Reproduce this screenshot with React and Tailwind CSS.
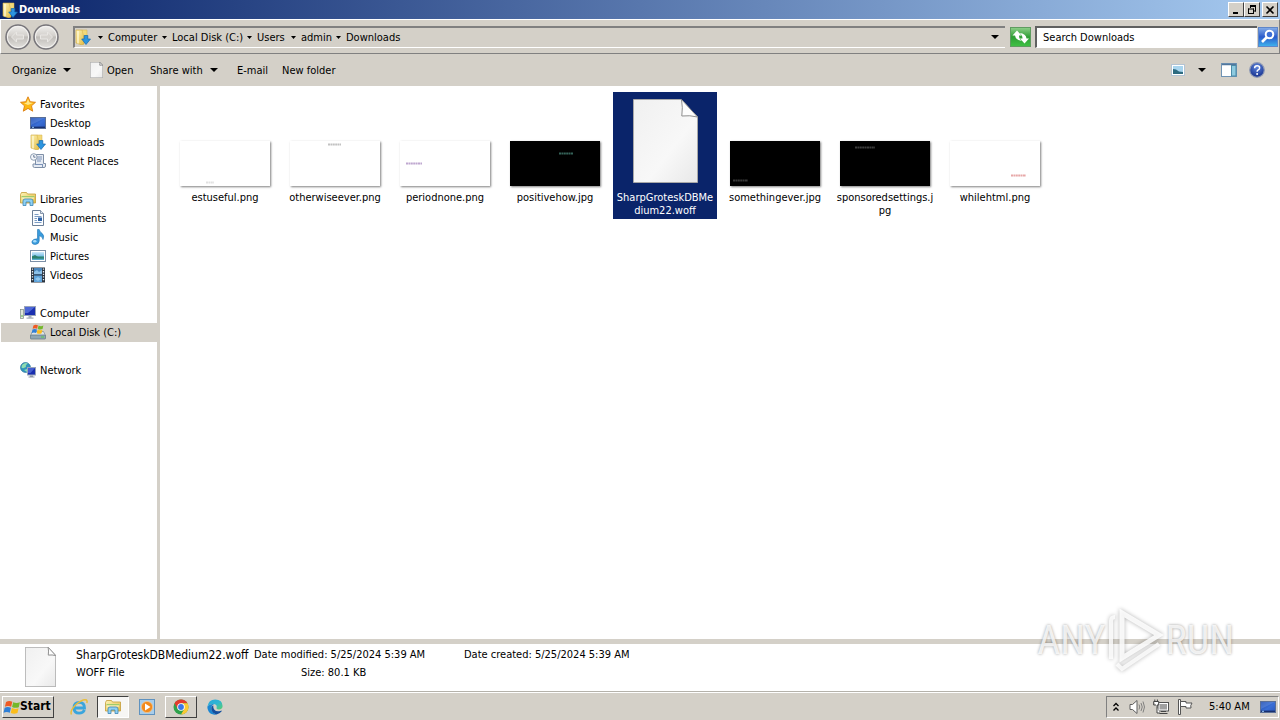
import React from "react";

function Svg({ w = 16, h = 16, children, className = "" }) {
  return (
    <svg width={w} height={h} viewBox={`0 0 ${w} ${h}`} className={`shrink-0 ${className}`} aria-hidden="true">
      {children}
    </svg>
  );
}

function Gradients() {
  return (
    <svg width="0" height="0" className="absolute" aria-hidden="true">
      <defs>
        <linearGradient id="folder" x1="0" y1="0" x2="1" y2="1">
          <stop offset="0" stopColor="#fdf3b4" />
          <stop offset="1" stopColor="#e3bb45" />
        </linearGradient>
        <linearGradient id="screen" x1="0" y1="0" x2="1" y2="1">
          <stop offset="0" stopColor="#1b3f9e" />
          <stop offset="0.55" stopColor="#3a6fd6" />
          <stop offset="1" stopColor="#2a55b8" />
        </linearGradient>
        <linearGradient id="sky" x1="0" y1="0" x2="0" y2="1">
          <stop offset="0" stopColor="#cfeafa" />
          <stop offset="0.5" stopColor="#7cc0e6" />
          <stop offset="0.6" stopColor="#2f8a7a" />
          <stop offset="1" stopColor="#5cb3de" />
        </linearGradient>
        <linearGradient id="orb" x1="0" y1="0" x2="0" y2="1">
          <stop offset="0" stopColor="#f2f1ef" />
          <stop offset="0.45" stopColor="#d3d0cc" />
          <stop offset="0.5" stopColor="#bfbcb8" />
          <stop offset="1" stopColor="#e6e4e1" />
        </linearGradient>
        <linearGradient id="paper" x1="0" y1="0" x2="1" y2="1">
          <stop offset="0" stopColor="#f0f0f0" />
          <stop offset="0.6" stopColor="#f8f8f8" />
          <stop offset="1" stopColor="#e8e8e8" />
        </linearGradient>
        <linearGradient id="green" x1="0" y1="0" x2="0" y2="1">
          <stop offset="0" stopColor="#8fd08a" />
          <stop offset="0.5" stopColor="#2f9e35" />
          <stop offset="1" stopColor="#3fc244" />
        </linearGradient>
        <linearGradient id="blue" x1="0" y1="0" x2="0" y2="1">
          <stop offset="0" stopColor="#86aee8" />
          <stop offset="0.5" stopColor="#2a5bcb" />
          <stop offset="1" stopColor="#3fb4ee" />
        </linearGradient>
        <radialGradient id="help" cx="0.5" cy="0.3" r="0.7">
          <stop offset="0" stopColor="#5f86dd" />
          <stop offset="1" stopColor="#152f8c" />
        </radialGradient>
        <linearGradient id="edge" x1="0" y1="0" x2="1" y2="1">
          <stop offset="0" stopColor="#2aa7d8" />
          <stop offset="0.5" stopColor="#2fb5d4" />
          <stop offset="1" stopColor="#5ad06a" />
        </linearGradient>
      </defs>
    </svg>
  );
}

const DownloadsIcon = () => (
  <Svg>
    <path d="M1 1h6l2 1.5V15L7 16 1 14z" fill="url(#folder)" stroke="#cda63a" strokeWidth=".6" />
    <path d="M7 1h5v8H9z" fill="#f3d979" stroke="#d4b04a" strokeWidth=".5" />
    <path d="M3 2v12.5" stroke="#fffbe0" strokeWidth="1.2" />
    <path d="M9.2 6.5h3.6V10h2.7L11 15.5 6.7 10h2.5z" fill="#2c95e0" stroke="#1467ad" strokeWidth=".7" />
  </Svg>
);

const StarIcon = () => (
  <Svg>
    <path d="M8 .8l2.2 4.9 5.3.6-4 3.5 1.2 5.4L8 12.4l-4.7 2.8 1.2-5.4-4-3.5 5.3-.6z" fill="#fdb813" stroke="#dd7f12" strokeWidth=".9" />
    <path d="M8 3l1.5 3.6 3.6.5L8 9 4 7.2l2.6-.5z" fill="#ffe78a" />
  </Svg>
);

const DesktopIcon = () => (
  <Svg>
    <rect x=".5" y="2.5" width="15" height="11" fill="url(#screen)" stroke="#5a6f96" />
    <path d="M1 3h14L1 10z" fill="#7ba7ef" opacity=".35" />
    <path d="M1 12.3h14" stroke="#18306e" strokeWidth="1.4" />
    <path d="M2 12.3h2" stroke="#9fd0ff" />
  </Svg>
);

const RecentIcon = () => (
  <Svg>
    <path d="M5.5 1.5h8v9h2v2.5q0 1.5-1.5 1.5H4.5q-1.5 0-1.5-1.5v-2h2.5z" fill="#e6ebf3" stroke="#7f8fa6" />
    <path d="M7 4h5M7 6h5M7 8h4M5 11.5h7M12.5 11v3" stroke="#7c93b8" />
    <circle cx="3.8" cy="4" r="3.3" fill="#f4f7fb" stroke="#8f9eb2" />
    <path d="M3.8 2v2.2h1.7" stroke="#44587a" fill="none" strokeWidth=".8" />
  </Svg>
);

const LibraryIcon = () => (
  <Svg>
    <path d="M.5 3.5l1-2h5l1 1.5h8v9H.5z" fill="url(#folder)" stroke="#c49c36" strokeWidth=".8" />
    <path d="M1.5 5h13v1.5h-13z" fill="#9fcb6a" />
    <path d="M2 7h12" stroke="#fff8cf" />
    <path d="M3 14.5V10q0-2 2-2h6q2 0 2 2v4.5h-3V11H6v3.5z" fill="#8fd0f2" stroke="#3c86b6" strokeWidth=".8" />
  </Svg>
);

const DocumentIcon = () => (
  <Svg>
    <path d="M2.500.5h8l3 3v12h-11z" fill="#fbfdff" stroke="#6c7f98" />
    <path d="M10.500.5v3h3" fill="#dfe7f1" stroke="#6c7f98" strokeWidth=".8" />
    <path d="M4.5 4.5h4M4.5 6.5h7M4.5 8.5h2.5M4.5 10.5h2.5M4.5 12.5h7" stroke="#7c9cc4" />
    <rect x="8" y="7.5" width="4" height="3.5" fill="#2d62a8" />
  </Svg>
);

const MusicIcon = () => (
  <Svg>
    <path
      d="M7.500.5h1.700q.5 2.300 2.800 3.800 2.800 2.200 1 6.200-.2-3-3.800-3.800V12q-.2 3-3.700 3.500Q1.500 15.500 2 12.500q.8-2.800 5.500-2.700z"
      fill="#3a9bdc"
      stroke="#1f74b4"
      strokeWidth=".6"
    />
    <ellipse cx="4.800" cy="12.300" rx="1.700" ry="1.300" fill="#a6dcfb" />
  </Svg>
);

const PictureIcon = () => (
  <Svg>
    <rect x=".5" y="2.5" width="15" height="11" fill="#fff" stroke="#7c8fa6" />
    <rect x="2" y="4" width="12" height="8" fill="url(#sky)" />
    <path d="M2 8.5l3-1.5 3 2 6 .5v1H2z" fill="#2b7f6c" />
  </Svg>
);

const VideoIcon = () => (
  <Svg>
    <rect x="1" y=".5" width="14" height="15" fill="#2b3440" />
    <rect x="4" y="1" width="8" height="6.5" fill="#4a86bd" />
    <rect x="4" y="8.5" width="8" height="6.5" fill="#5fa4dc" />
    <path d="M4 5l3-2 2 2 3-2v4H4zM5 12l3-2 3 2-3 2z" fill="#9cd0f2" opacity=".8" />
    <path d="M2.5 1.5v13M13.5 1.5v13" stroke="#e8eef4" strokeWidth="1.3" strokeDasharray="1.3 1.3" />
  </Svg>
);

const ComputerIcon = () => (
  <Svg>
    <rect x=".5" y="4.500" width="3" height="9" fill="#dfe6d8" stroke="#7d8b86" strokeWidth=".7" />
    <path d="M2 10v2" stroke="#5bb544" />
    <rect x="4.500" y="1.500" width="11" height="9" fill="#1a2fb0" stroke="#9aa4b8" />
    <path d="M5 2h10L8 8H5z" fill="#6f8df0" opacity=".6" />
    <path d="M8.500 11h3v1.500h2v1.300h-7v-1.300h2z" fill="#a8b0bb" />
  </Svg>
);

function Flag() {
  return (
    <g>
      <path d="M1.800 1.800Q4.600 0 7.400 1.600L6.400 6Q3.700 4.600.8 6z" fill="#ee5a24" />
      <path d="M8.200 2q3 1.400 6 0l-1 4.400q-3 1.200-6-.2z" fill="#74b82b" />
      <path d="M.6 6.900q2.900-1.300 5.600.1L5.200 11.400Q2.500 10-.4 11.300z" fill="#2f7fd6" />
      <path d="M7 7.200q3 1.400 6 .1l-1 4.300q-3 1.300-6 0z" fill="#fbbd1b" />
    </g>
  );
}

const DiskIcon = () => (
  <Svg>
    <path d="M2.500 7.500h11l2 4H.5z" fill="#dce3e8" stroke="#7f8c96" strokeWidth=".7" />
    <rect x=".5" y="11" width="15" height="4" rx=".6" fill="#8fa6b2" stroke="#5e7581" strokeWidth=".7" />
    <path d="M11 13h3" stroke="#55d04a" />
    <g transform="translate(2 0) scale(.8)">
      <Flag />
    </g>
  </Svg>
);

const NetworkIcon = () => (
  <Svg>
    <circle cx="5.500" cy="5.500" r="5" fill="#3193bd" stroke="#1d6b94" strokeWidth=".6" />
    <path d="M2 3q3-3 6-1.500Q5 3 6 5 3 7 1.500 5.500zM4 8l3-1v3z" fill="#8fdcb0" />
    <rect x="7.500" y="5.500" width="8" height="7.500" fill="#1a2fb0" stroke="#98a3b8" />
    <path d="M8 6h7l-4.500 5H8z" fill="#6f8df0" opacity=".5" />
    <path d="M10 13.500h3v1h1.500v1h-6v-1H10z" fill="#8f98a6" />
  </Svg>
);

function PageIcon({ w, h }) {
  return (
    <svg width={w} height={h} viewBox="0 0 65 84" preserveAspectRatio="none" className="shrink-0" aria-hidden="true">
      <path
        d="M.500.500H48L64.500 18V83.500H.500z"
        fill="url(#paper)"
        stroke="#a8a8a8"
        strokeWidth="1"
        vectorEffect="non-scaling-stroke"
      />
      <path
        d="M48.500.500q1.500 8 .300 16.500 8-1 15.700 1z"
        fill="#fdfdfd"
        stroke="#8f8f8f"
        strokeWidth="1"
        vectorEffect="non-scaling-stroke"
      />
    </svg>
  );
}

function Caret({ small = false }) {
  return small ? (
    <Svg w={5} h={3}>
      <path d="M0 0h5L2.500 3z" />
    </Svg>
  ) : (
    <Svg w={8} h={4}>
      <path d="M0 0h8L4 4z" />
    </Svg>
  );
}

const RAISED = "border border-t-white border-l-white border-r-[#404040] border-b-[#404040] bg-[#d4d0c8]";

function TitleBar() {
  return (
    <header className="flex h-[19px] shrink-0 items-center bg-linear-to-r/srgb from-[#0a246a] to-[#a6caf0] pr-[2px] pl-[2px]">
      <DownloadsIcon />
      <h1 className="ml-px flex-1 text-[11px] leading-[13px] font-bold text-white">Downloads</h1>
      <div className="flex">
        <button aria-label="Minimize" className={`flex h-[15px] w-4 items-center justify-center ${RAISED}`}>
          <Svg w={10} h={10}>
            <path d="M2 7h5v2H2z" />
          </Svg>
        </button>
        <button aria-label="Restore" className={`flex h-[15px] w-4 items-center justify-center ${RAISED}`}>
          <Svg w={10} h={10}>
            <path d="M3 .5h6M3.500 0v3M8.500 0v6.500M7 6h2M1 4h6M1.500 3.500V9M6.500 3.500V9M1 8.500h6M3 1.500h6" stroke="#000" fill="none" />
          </Svg>
        </button>
        <button aria-label="Close" className={`ml-[2px] flex h-[15px] w-4 items-center justify-center ${RAISED}`}>
          <Svg w={10} h={10}>
            <path d="M1.500 1.500l7 7M8.500 1.500l-7 7" stroke="#000" strokeWidth="1.600" />
          </Svg>
        </button>
      </div>
    </header>
  );
}

function NavButton({ label, flip }) {
  return (
    <button aria-label={label}>
      <Svg w={26} h={26}>
        <circle cx="13" cy="13" r="12" fill="url(#orb)" stroke="#77757a" strokeWidth="1.500" />
        <circle cx="13" cy="13" r="10.600" fill="none" stroke="#f4f3f1" strokeWidth="1" />
        <g transform={flip ? "translate(26 0) scale(-1 1)" : undefined}>
          <path d="M6.500 13l5-5v3h7v4h-7v3z" fill="#d6d3cf" stroke="#e9e7e4" strokeWidth="1" />
        </g>
      </Svg>
    </button>
  );
}

const crumbs = [
  { name: "Computer", width: "w-16" },
  { name: "Local Disk (C:)", width: "w-[85px]" },
  { name: "Users", width: "w-11" },
  { name: "admin", width: "w-[45px]" },
  { name: "Downloads", width: "w-16" },
];

function AddressBar() {
  return (
    <div className="flex h-[35px] shrink-0 items-center border border-t-white border-l-white border-r-[#808080] border-b-[#808080] pr-px pl-1">
      <div className="flex gap-[2px]">
        <NavButton label="Back" />
        <NavButton label="Forward" flip />
      </div>
      <nav
        aria-label="Address"
        className="ml-[14px] flex h-[22px] flex-1 items-center border-t-2 border-b border-l-2 border-t-[#808080] border-b-white border-l-[#808080]"
      >
        <DownloadsIcon />
        <div className="ml-[7px] flex">
          {crumbs.map((c) => (
            <button key={c.name} className={`flex items-center gap-[5px] whitespace-nowrap ${c.width}`}>
              <Caret small />
              {c.name}
            </button>
          ))}
        </div>
        <button aria-label="Recent locations" className="ml-auto p-1 pr-[6px]">
          <Caret />
        </button>
      </nav>
      <button aria-label="Refresh" className="ml-[5px]">
        <Svg w={22} h={22}>
          <rect x=".5" y="1.500" width="20" height="19" fill="url(#green)" stroke="#5f9c60" />
          <path d="M2.500 9.500l4.500-5 4.500 5H9q0 3.500 3 5.500-6.500-.5-7-5.500z" fill="#fff" />
          <path d="M19 12.500l-4.500 5-4.500-5h2.500Q12.500 9 9.500 7q6.500.5 7 5.500z" fill="#fff" />
        </Svg>
      </button>
      <div className="ml-[3px] flex h-[22px] w-[222px] items-center border-t-2 border-b border-l-2 border-t-[#606060] border-b-white border-l-[#606060] bg-white">
        <input aria-label="Search" defaultValue="Search Downloads" className="w-full bg-transparent px-[6px] outline-none" />
      </div>
      <button aria-label="Search" className="ml-px">
        <Svg w={20} h={22}>
          <rect x=".5" y="1.500" width="19" height="19" fill="url(#blue)" stroke="#5f86c8" />
          <circle cx="11.500" cy="8.500" r="3.800" fill="#3d6fd6" stroke="#fff" strokeWidth="2" />
          <path d="M8.500 11.500L4 16" stroke="#fff" strokeWidth="2.600" />
        </Svg>
      </button>
    </div>
  );
}

function Toolbar() {
  return (
    <div role="toolbar" className="flex h-8 shrink-0 items-center pr-[15px] pl-3">
      <button className="flex w-[78px] items-center gap-[7px]">
        Organize
        <Caret />
      </button>
      <button className="flex w-[60px] items-center gap-1">
        <PageIcon w={13} h={16} />
        Open
      </button>
      <button className="flex w-[87px] items-center gap-[7px]">
        Share with
        <Caret />
      </button>
      <button className="w-[45px] text-left">E-mail</button>
      <button className="whitespace-nowrap">New folder</button>
      <div className="ml-auto flex items-center">
        <button aria-label="Change your view">
          <Svg w={14} h={12}>
            <rect x=".5" y=".5" width="13" height="11" fill="#fff" stroke="#b4c4d4" />
            <rect x="2" y="2" width="10" height="8" fill="#a9d5ef" />
            <path d="M2 5l3 .5 3 2 4 .5v2H2z" fill="#2d6b80" />
          </Svg>
        </button>
        <button aria-label="More view options" className="ml-[13px]">
          <Caret />
        </button>
        <button aria-label="Preview pane" className="ml-[15px]">
          <Svg w={16} h={14}>
            <rect x=".5" y=".5" width="15" height="13" fill="#fff" stroke="#6f93b4" />
            <path d="M1 1.500h14" stroke="#52779c" strokeWidth="1.500" />
            <rect x="10.500" y="2.500" width="4.500" height="10.500" fill="#8ecbe0" stroke="#4b8ba8" />
          </Svg>
        </button>
        <button aria-label="Help" className="ml-3">
          <Svg>
            <circle cx="8" cy="8" r="7.300" fill="url(#help)" stroke="#8f9ab5" strokeWidth="1.200" />
            <path d="M5.600 6.300q0-2.500 2.500-2.500t2.500 2.100q0 1.300-1.400 2-1.100.6-1.100 1.900" fill="none" stroke="#fff" strokeWidth="1.500" />
            <circle cx="8.100" cy="11.900" r="1" fill="#fff" />
          </Svg>
        </button>
      </div>
    </div>
  );
}

const groups = [
  {
    name: "Favorites",
    Icon: StarIcon,
    items: [
      { name: "Desktop", Icon: DesktopIcon },
      { name: "Downloads", Icon: DownloadsIcon },
      { name: "Recent Places", Icon: RecentIcon },
    ],
  },
  {
    name: "Libraries",
    Icon: LibraryIcon,
    items: [
      { name: "Documents", Icon: DocumentIcon },
      { name: "Music", Icon: MusicIcon },
      { name: "Pictures", Icon: PictureIcon },
      { name: "Videos", Icon: VideoIcon },
    ],
  },
  { name: "Computer", Icon: ComputerIcon, items: [{ name: "Local Disk (C:)", Icon: DiskIcon, active: true }] },
  { name: "Network", Icon: NetworkIcon, items: [] },
];

function Sidebar() {
  return (
    <nav aria-label="Folders" className="flex w-40 shrink-0 flex-col gap-[19px] border-r-3 border-[#d4d0c8] pt-[9px] pl-px">
      {groups.map(({ name, Icon, items }) => (
        <div key={name}>
          <a href="#" className="flex h-[19px] items-start gap-1 pt-px pl-[19px] leading-[18px]">
            <Icon />
            {name}
          </a>
          {items.map((item) => (
            <a
              key={item.name}
              href="#"
              className={`flex h-[19px] items-start gap-1 pt-px pl-[29px] leading-[18px] ${item.active ? "bg-[#d4d0c8]" : ""}`}
            >
              <item.Icon />
              {item.name}
            </a>
          ))}
        </div>
      ))}
    </nav>
  );
}

const files = [
  { lines: ["estuseful.png"], x: 26, y: 41, w: 8, ink: "#dcdcdc" },
  { lines: ["otherwiseever.png"], x: 38, y: 3, w: 13, ink: "#b8b8b8" },
  { lines: ["periodnone.png"], x: 6, y: 22, w: 16, ink: "#b49ac8" },
  { lines: ["positivehow.jpg"], dark: true, x: 49, y: 12, w: 14, ink: "#3f7468" },
  { lines: ["SharpGroteskDBMe", "dium22.woff"], selected: true },
  { lines: ["somethingever.jpg"], dark: true, x: 3, y: 39, w: 15, ink: "#444444" },
  { lines: ["sponsoredsettings.j", "pg"], dark: true, x: 15, y: 6, w: 20, ink: "#484848" },
  { lines: ["whilehtml.png"], x: 61, y: 34, w: 15, ink: "#e39a9a" },
];

function Thumb({ file }) {
  if (file.selected) return <PageIcon w={65} h={84} />;
  return (
    <div className={`h-[45px] w-[90px] shadow-[1px_1px_2px_0px_rgba(0,0,0,0.5)] ${file.dark ? "bg-black" : "bg-white"}`}>
      <Svg w={90} h={45}>
        <path d={`M${file.x} ${file.y + 0.5}h${file.w}`} stroke={file.ink} strokeWidth="2" strokeDasharray="2 .4" opacity=".85" />
      </Svg>
    </div>
  );
}

function FileGrid() {
  return (
    <main className="flex flex-1 flex-wrap content-start items-start gap-[6px] pt-[6px] pl-[13px]">
      {files.map((file) => (
        <button
          key={file.lines[0]}
          className={`flex w-[104px] flex-col items-center pb-[2px] ${file.selected ? "bg-[#0a246a] text-white" : ""}`}
        >
          <span className={`flex h-[99px] items-end ${file.selected ? "pb-2" : "pb-[5px]"}`}>
            <Thumb file={file} />
          </span>
          {file.lines.map((line) => (
            <span key={line} className="block leading-[13px] whitespace-nowrap">
              {line}
            </span>
          ))}
        </button>
      ))}
    </main>
  );
}

function Details() {
  return (
    <section aria-label="Details" className="flex h-12 shrink-0 items-start border-b border-[#b5b2ab] bg-white pt-[3px] pl-[25px]">
      <PageIcon w={31} h={40} />
      <div className="ml-5 flex flex-col gap-[2px] leading-4">
        <p className="flex whitespace-nowrap">
          <span className="w-[178px] text-[12px]">SharpGroteskDBMedium22.woff</span>
          <span className="w-[210px]">Date modified: 5/25/2024 5:39 AM</span>
          <span>Date created: 5/25/2024 5:39 AM</span>
        </p>
        <p className="flex">
          <span className="w-[225px]">WOFF File</span>
          <span>Size: 80.1 KB</span>
        </p>
      </div>
    </section>
  );
}

function Taskbar() {
  return (
    <footer className="flex h-7 shrink-0 items-center border-t border-white bg-[#d4d0c8] pr-px pl-[2px]">
      <button className={`flex h-[22px] w-[52px] items-center text-[12px] font-bold ${RAISED}`}>
        <Svg w={17} h={16}>
          <g transform="translate(1 1) scale(1.120)">
            <Flag />
          </g>
        </Svg>
        Start
      </button>
      <button aria-label="Internet Explorer" className="ml-4">
        <Svg w={18} h={18}>
          <path d="M14.500 12Q13 15.200 9.200 15.200 4 15.200 4 9.800 4 4.300 9.200 4.300q5.300 0 5.300 5.700H5" fill="none" stroke="#3aa5dd" strokeWidth="2.800" />
          <path d="M1.500 16.500Q-.5 13 6 6.500 13 .5 16.500 2q1 1 .3 3" fill="none" stroke="#e9bd3a" strokeWidth="1.500" />
        </Svg>
      </button>
      <button
        aria-label="File Explorer"
        className="ml-[9px] flex h-[22px] w-8 items-center justify-center border border-t-[#404040] border-r-white border-b-white border-l-[#404040] bg-[#f7f6f4]"
      >
        <LibraryIcon />
      </button>
      <button aria-label="Media Player" className="ml-[10px]">
        <Svg>
          <rect x=".5" y=".5" width="15" height="15" fill="#a8cdea" stroke="#5f92bf" />
          <circle cx="8" cy="8" r="5.600" fill="#f28a1c" stroke="#f6c489" strokeWidth=".8" />
          <path d="M6 4.500l5.500 3.500L6 11.500z" fill="#fff" />
        </Svg>
      </button>
      <button aria-label="Chrome" className={`ml-[10px] flex h-[22px] w-8 items-center justify-center ${RAISED}`}>
        <Svg>
          <circle cx="8" cy="8" r="7.500" fill="#2fa24c" />
          <path d="M1.500 4.250A7.500 7.500 0 0 1 14.500 4.250L8 4.250 4.750 9.900z" fill="#e33b2e" />
          <path d="M14.500 4.250A7.500 7.500 0 0 1 8 15.500L11.250 9.900 8 4.250z" fill="#fcc934" />
          <circle cx="8" cy="8" r="3.800" fill="#fff" />
          <circle cx="8" cy="8" r="2.900" fill="#3a77e8" />
        </Svg>
      </button>
      <button aria-label="Edge" className="ml-[10px]">
        <Svg>
          <path d="M.4 7.500Q1.500.4 8.200.4 15.600.8 15.600 7q0 3.400-3.800 3.400-2.600 0-2.200-1.600Q10.400 5.500 7 5 2.500 4.600.4 7.500z" fill="url(#edge)" />
          <path d="M.4 7.500Q2.500 4.600 7 5 4 6.500 4.300 10q.7 4 5.200 5.400Q4 16.500 1.500 12.300.2 10 .4 7.500z" fill="#1b86d2" />
          <path d="M6.200 6.200Q3.600 8 4.500 11q1.300 3.700 5 4.400 3.300-.5 5.200-3.200.2-.8-.7-.5-4.500 1.600-6.600-1Q6 8.600 6.200 6.200z" fill="#134f9e" />
        </Svg>
      </button>
      <div className="ml-auto flex h-[22px] items-center border border-t-[#808080] border-r-white border-b-white border-l-[#808080] pr-[2px] pl-[6px]">
        <button aria-label="Show hidden icons">
          <Svg w={6} h={10}>
            <path d="M.5 4L3 1.500 5.500 4M.5 8.500L3 6l2.500 2.500" fill="none" stroke="#000" strokeWidth="1.300" />
          </Svg>
        </button>
        <button aria-label="Volume" className="ml-[10px]">
          <Svg>
            <path d="M1 5.500h2.500L8 1.500v13L3.500 10.500H1z" fill="#fff" stroke="#5f5f5f" />
            <path d="M10 5.500q1.500 2.500 0 5M12 4q2.500 4 0 8M14 2.500q3 5.500 0 11" fill="none" stroke="#777" strokeWidth=".9" />
          </Svg>
        </button>
        <button aria-label="Network" className="ml-2">
          <Svg>
            <rect x="5" y="3.500" width="10.500" height="8.500" fill="#fff" stroke="#444" strokeWidth=".9" />
            <rect x="6.500" y="5" width="7.500" height="5.500" fill="#a0a0a0" />
            <path d="M8 12.500h5M6.500 14.500h8" stroke="#444" strokeWidth="1.200" />
            <path d="M.7 2.500h5v3.500H4v8h3" fill="#fff" stroke="#444" />
            <path d="M1.800.5v2M4.400.5v2M.700 2.500V6H3" fill="none" stroke="#444" />
          </Svg>
        </button>
        <button aria-label="Action Center" className="ml-2">
          <Svg>
            <path d="M1.500.5h2v15h-2z" fill="#fff" stroke="#555" />
            <path d="M3.500 2.500H9V4h6q-2 2.500-1 5H9V7.500H3.500z" fill="#fff" stroke="#555" />
          </Svg>
        </button>
        <time className="ml-4 w-[43px] whitespace-nowrap">5:40 AM</time>
        <button aria-label="Show desktop" className="ml-2">
          <DesktopIcon />
        </button>
      </div>
    </footer>
  );
}

function Watermark() {
  return (
    <div className="pointer-events-none absolute right-[46px] bottom-[46px] flex items-center font-['Roboto_Condensed','Liberation_Sans_Narrow',sans-serif] text-[40px] leading-[62px] text-white/80 [text-shadow:0_0_3px_rgba(0,0,0,0.4)]">
      <span>ANY</span>
      <svg width="60" height="66" viewBox="0 0 60 66" className="drop-shadow-[0_0_2px_rgba(0,0,0,0.35)]" aria-hidden="true">
        <path d="M16 5v45L53 27z" fill="none" stroke="#fff" strokeWidth="5" opacity=".85" />
        <path d="M9 9q-4 0-4 4v38M11 56l5 5L53 36" fill="none" stroke="#fff" strokeWidth="4" opacity=".8" />
      </svg>
      <span>RUN</span>
    </div>
  );
}

export default function App() {
  return (
    <div className="relative flex h-screen flex-col bg-[#d4d0c8] font-['DejaVu_Sans_Condensed','Noto_Sans',sans-serif] text-[11px] leading-[13px] text-black">
      <Gradients />
      <TitleBar />
      <AddressBar />
      <Toolbar />
      <div className="flex min-h-0 flex-1 bg-white">
        <Sidebar />
        <FileGrid />
      </div>
      <div className="h-[5px] shrink-0 bg-[#d4d0c8]" />
      <Details />
      <Taskbar />
      <Watermark />
    </div>
  );
}
